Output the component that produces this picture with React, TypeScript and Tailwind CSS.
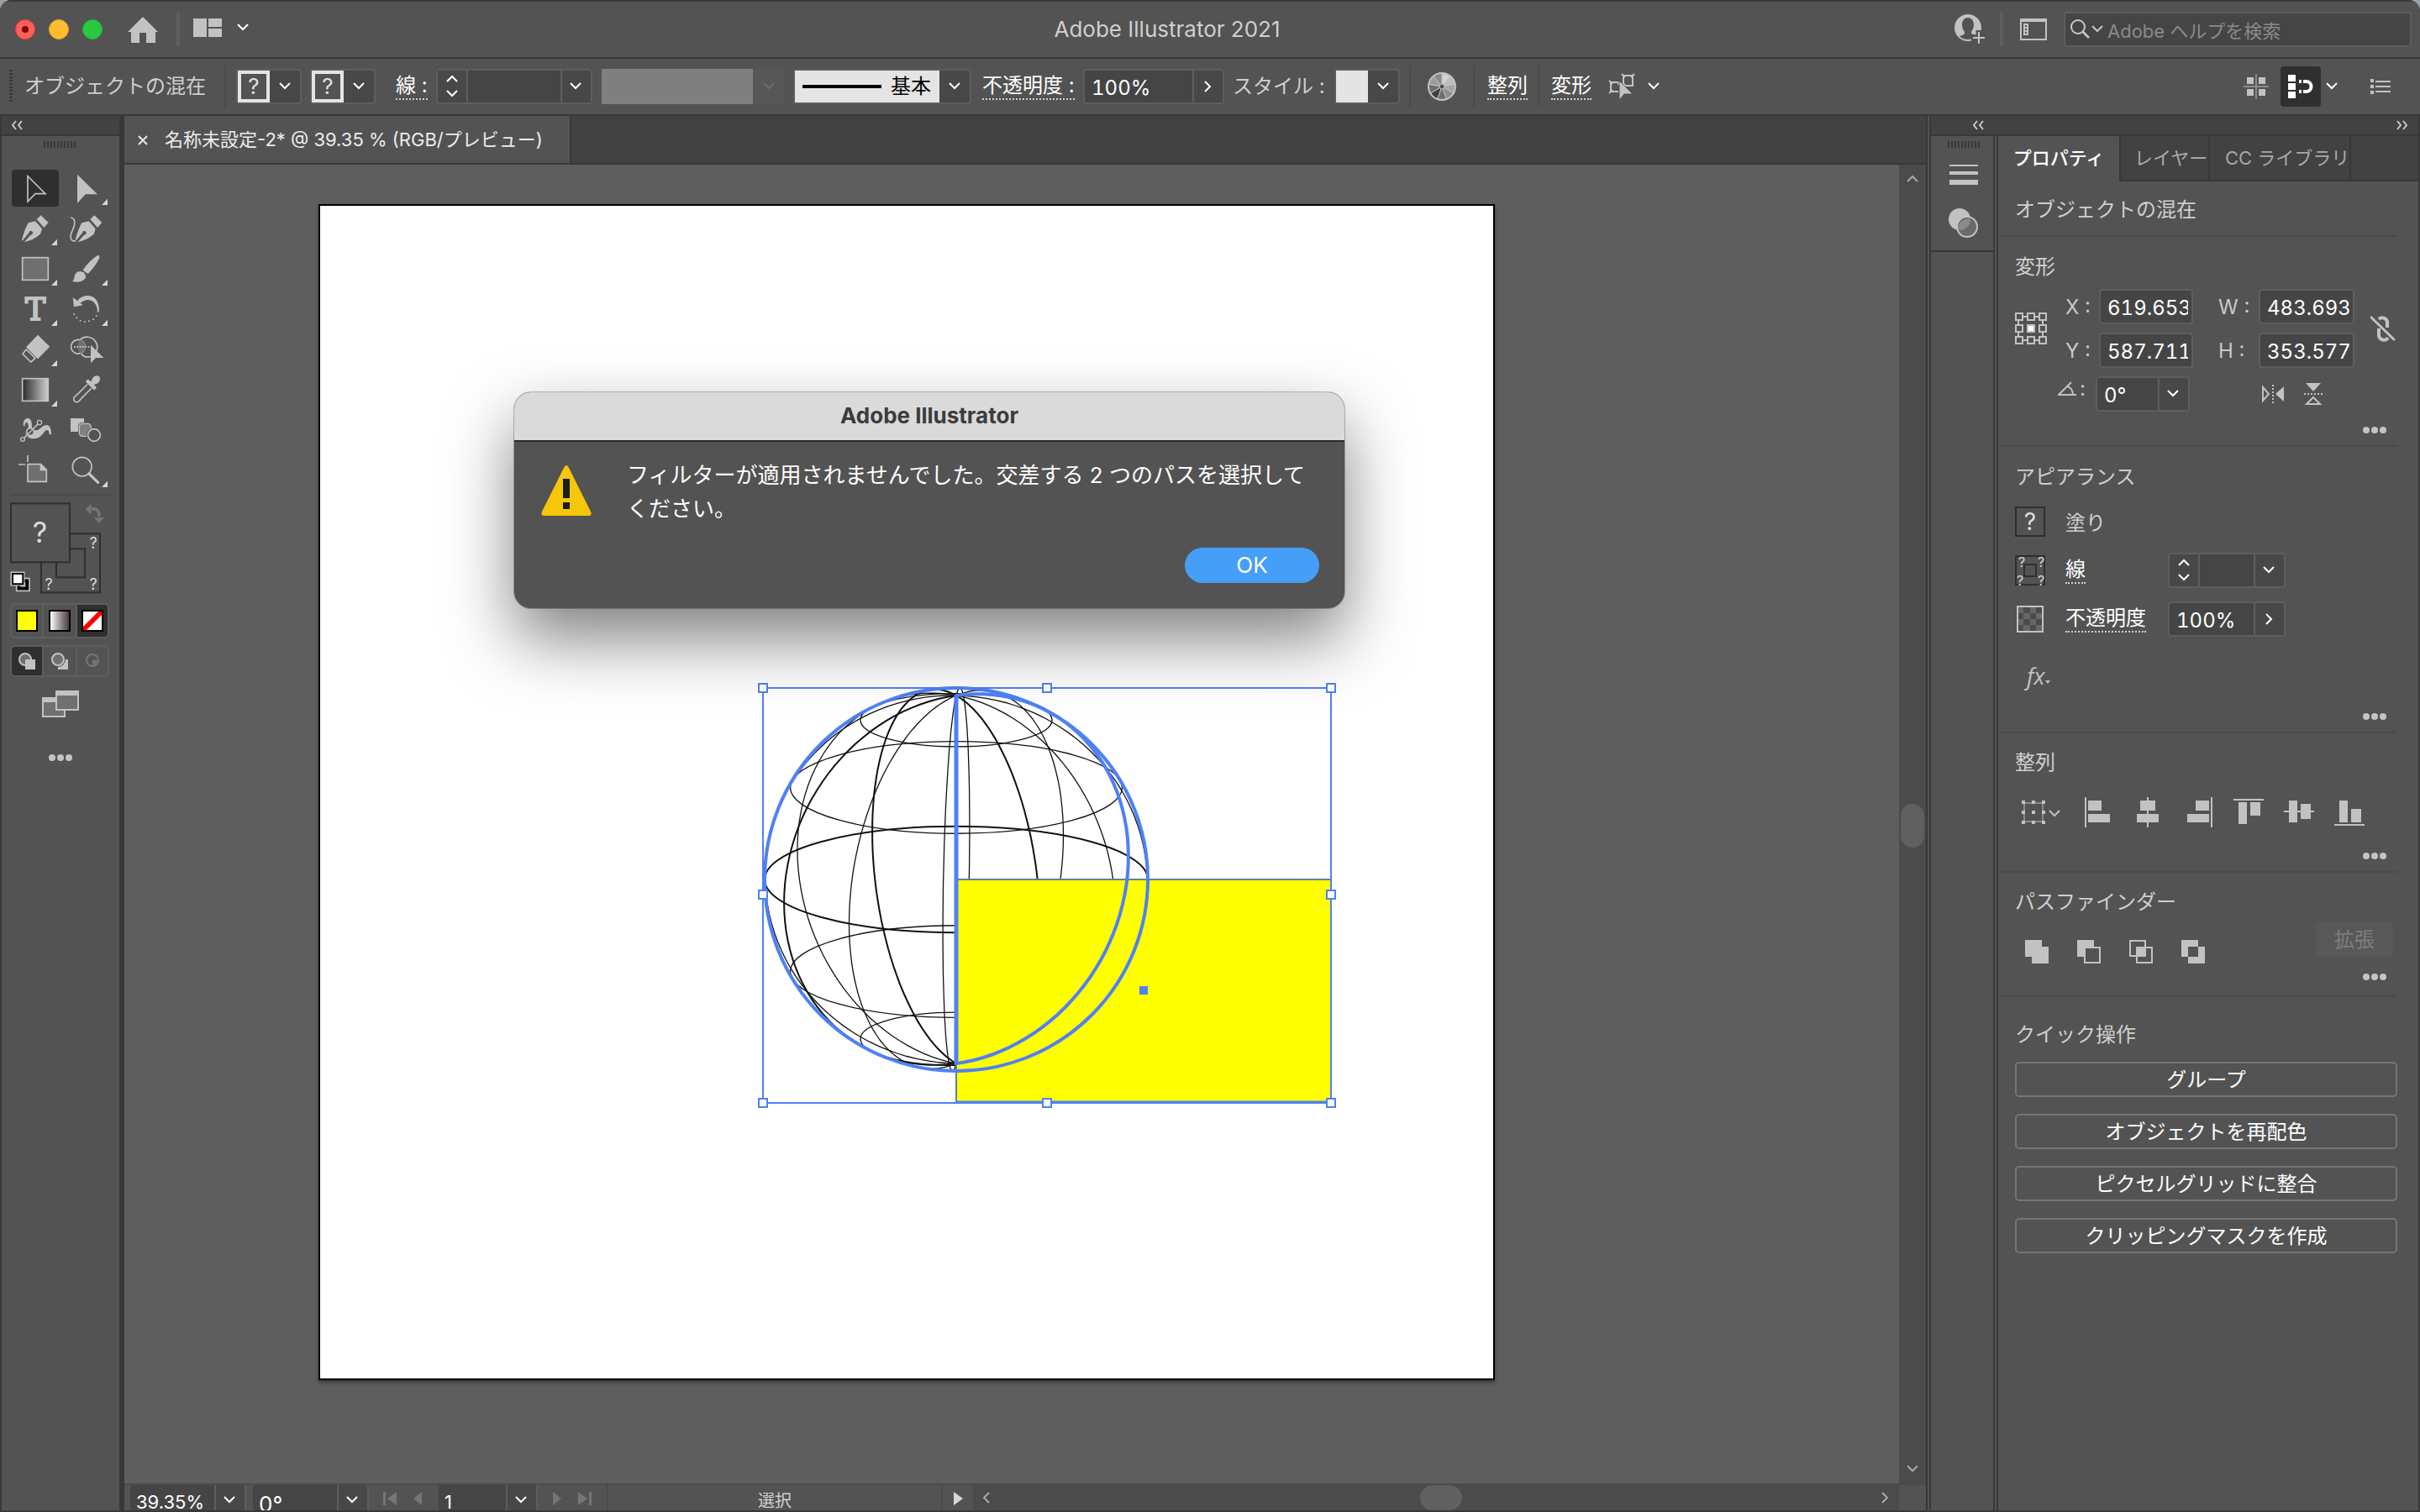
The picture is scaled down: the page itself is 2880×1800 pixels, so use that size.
import React from "react";

type IconProps = { w: number; h: number; vb?: string; children: React.ReactNode; className?: string };

function Icon({ w, h, vb, children, className = "" }: IconProps) {
  return (
    <svg width={w} height={h} viewBox={vb ?? `0 0 ${w} ${h}`} className={`shrink-0 ${className}`} aria-hidden="true">
      {children}
    </svg>
  );
}

function Chevron({ dir = "down", className = "text-white" }: { dir?: "down" | "up" | "left" | "right"; className?: string }) {
  const paths = {
    down: "M2 4l6 6 6-6",
    up: "M2 11l6-6 6 6",
    left: "M11 2l-6 6 6 6",
    right: "M5 2l6 6-6 6",
  };
  return (
    <Icon w={16} h={16} className={className}>
      <path d={paths[dir]} fill="none" stroke="currentColor" strokeWidth="2" />
    </Icon>
  );
}

function Double({ dir }: { dir: "left" | "right" }) {
  return (
    <Icon w={14} h={12} className="text-[#c8c8c8]">
      <path
        d={dir === "left" ? "M6 1L2 6l4 5M13 1L9 6l4 5" : "M1 1l4 5-4 5M8 1l4 5-4 5"}
        fill="none"
        stroke="currentColor"
        strokeWidth="2"
      />
    </Icon>
  );
}

function Grip() {
  return (
    <Icon w={38} h={8}>
      {Array.from({ length: 10 }, (_, i) => (
        <rect key={i} x={i * 4} y="0" width="2" height="8" fill="#383838" />
      ))}
    </Icon>
  );
}

function MoreButton({ label }: { label: string }) {
  return (
    <button aria-label={label} className="flex h-5 w-7 items-center">
      <Icon w={28} h={8}>
        <circle cx="4" cy="4" r="4" fill="#c4c4c4" />
        <circle cx="14" cy="4" r="4" fill="#c4c4c4" />
        <circle cx="24" cy="4" r="4" fill="#c4c4c4" />
      </Icon>
    </button>
  );
}

/* ---------- title bar ---------- */

function TitleBar() {
  return (
    <header className="flex h-[70px] shrink-0 items-center border-y-2 border-[#383838] bg-[#535353] pr-[10px] pl-[2px]">
      <div className="flex w-[450px] items-center">
        <div className="ml-4 flex gap-4">
          <button aria-label="閉じる" className="flex size-6 items-center justify-center rounded-full border border-[#d9453c] bg-[#ff5f57]">
            <span className="size-2 rounded-full bg-[#7c0500]" />
          </button>
          <button aria-label="しまう" className="size-6 rounded-full border border-[#e2a52c] bg-[#febc2e]" />
          <button aria-label="拡大" className="size-6 rounded-full border border-[#24b237] bg-[#28c840]" />
        </div>
        <button aria-label="ホーム" className="ml-[30px]">
          <Icon w={36} h={32}>
            <path d="M18 1L36 19H33V32H22V20H14V32H4V19H0Z" fill="#c2c2c2" />
          </Icon>
        </button>
        <span className="ml-[22px] h-10 w-1 bg-[#5e5e5e]" />
        <button aria-label="ワークスペース" className="ml-4 flex items-center gap-[17px] pb-1">
          <Icon w={34} h={22}>
            <path d="M0 0H16V22H0ZM18 0H34V10H18ZM18 12H34V22H18Z" fill="#c2c2c2" />
          </Icon>
          <Chevron />
        </button>
      </div>
      <h1 className="flex-1 text-center text-[26px] leading-[30px] text-[#cfcfcf]">Adobe Illustrator 2021</h1>
      <button aria-label="アカウント">
        <Icon w={38} h={36}>
          <circle cx="16" cy="16" r="16" fill="#c2c2c2" />
          <path
            d="M16 4C11.500 4 9 8 9 12.500C9 16 10.500 19 12 21C12.500 23.500 11 24.500 6 26C8 28.500 12 30 16 30C20 30 24 29 27 26V25C22 24 19.500 23.500 20 21C21.500 19 23 16 23 12.500C23 8 20.500 4 16 4Z"
            fill="#535353"
          />
          <path d="M29 19V36M20 28H38" stroke="#535353" strokeWidth="7" />
          <path d="M29 21V35M22 28H36" stroke="#c2c2c2" strokeWidth="2" />
        </Icon>
      </button>
      <span className="ml-4 h-10 w-1 bg-[#5e5e5e]" />
      <button aria-label="パネル表示" className="ml-5">
        <Icon w={32} h={26}>
          <rect x="1" y="1" width="30" height="24" fill="none" stroke="#c2c2c2" strokeWidth="2" />
          <path d="M0 0H32V4H0Z" fill="#c2c2c2" />
          <path d="M4 6H10V20H4Z" fill="#c2c2c2" />
          <path d="M6 8h2v2H6zM6 12h2v2H6zM6 16h2v2H6z" fill="#535353" />
        </Icon>
      </button>
      <label className="ml-5 flex h-[42px] w-[414px] items-center rounded-[4px] border-2 border-[#5e5e5e] bg-[#454545] pl-[6px]">
        <Icon w={24} h={24}>
          <circle cx="9" cy="9" r="8" fill="none" stroke="#c8c8c8" strokeWidth="2" />
          <path d="M14 14L22 22" stroke="#c8c8c8" strokeWidth="2.500" />
        </Icon>
        <Chevron className="text-[#c8c8c8]" />
        <input
          aria-label="ヘルプを検索"
          placeholder="Adobe ヘルプを検索"
          className="ml-1 min-w-0 flex-1 bg-transparent pt-1 text-[22px] outline-none placeholder:text-[#8a8a8a]"
        />
      </label>
    </header>
  );
}

/* ---------- control bar ---------- */

function UnknownPicker({ label }: { label: string }) {
  return (
    <button aria-label={label} className="flex h-[42px] w-[78px] rounded-[4px] border-2 border-[#5e5e5e] bg-[#484848]">
      <span className="flex h-full w-[38px] items-center justify-center border-4 border-[#e4e4e4] bg-[#535353] text-[26px] leading-none text-[#e0e0e0]">
        ?
      </span>
      <span className="flex h-full flex-1 items-center justify-center">
        <Chevron />
      </span>
    </button>
  );
}

function StrokeSpinner({ width, label }: { width: string; label: string }) {
  return (
    <div className={`flex h-[42px] ${width} rounded-[4px] border-2 border-[#5e5e5e] bg-[#454545]`}>
      <div className="flex w-9 flex-col items-center justify-between border-r-2 border-[#5e5e5e] bg-[#484848] py-[2px]">
        <button aria-label="増やす">
          <Chevron dir="up" />
        </button>
        <button aria-label="減らす">
          <Chevron />
        </button>
      </div>
      <input aria-label={label} className="min-w-0 flex-1 bg-transparent px-2 text-2xl text-white outline-none" />
      <button aria-label={`${label}の候補`} className="flex w-9 items-center justify-center border-l-2 border-[#5e5e5e] bg-[#484848] pr-[2px]">
        <Chevron />
      </button>
    </div>
  );
}

type ComboProps = { label: string; value: string; width: string; dir?: "down" | "right" };

function Combo({ label, value, width, dir = "down" }: ComboProps) {
  return (
    <div className={`flex h-[42px] ${width} shrink-0 rounded-[4px] border-2 border-[#5e5e5e] bg-[#454545]`}>
      <input
        aria-label={label}
        defaultValue={value}
        className="min-w-0 flex-1 bg-transparent pt-[3px] pl-2 text-2xl text-white tabular-nums outline-none"
      />
      <button aria-label={`${label}の候補`} className="flex w-9 items-center justify-center border-l-2 border-[#5e5e5e] bg-[#484848] pr-[2px]">
        <Chevron dir={dir} />
      </button>
    </div>
  );
}

const linkText = "border-b-2 border-dotted border-[#d0d0d0] text-2xl leading-[30px] whitespace-nowrap text-white";

function Separator({ className = "" }: { className?: string }) {
  return <span className={`h-[50px] w-[2px] shrink-0 bg-[#4b4b4b] ${className}`} />;
}

function ControlBar() {
  const fan = Array.from({ length: 9 }, (_, i) => i);
  const shades = ["#d2d2d2", "#bdbdbd", "#a5a5a5", "#8d8d8d", "#6e6e6e", "#414141", "#6e6e6e", "#9a9a9a", "#8a8a8a"];
  return (
    <div className="flex h-[68px] shrink-0 items-center border-b-2 border-[#383838] bg-[#535353] px-[2px]">
      <Icon w={4} h={40} className="ml-[9px]">
        <path d="M2 0V40" stroke="#383838" strokeWidth="4" strokeDasharray="2 2" />
      </Icon>
      <span className="ml-[14px] w-[238px] text-2xl leading-[30px] whitespace-nowrap text-[#cfcfcf]">オブジェクトの混在</span>
      <Separator />
      <div className="ml-3 flex gap-[10px]">
        <UnknownPicker label="塗り" />
        <UnknownPicker label="線のカラー" />
      </div>
      <div className="ml-6 w-12">
        <button className={linkText}>線 :</button>
      </div>
      <StrokeSpinner width="w-[186px]" label="線幅" />
      <button aria-label="可変線幅プロファイル" disabled className="ml-[11px] flex h-[42px] w-[218px]">
        <span className="h-full w-[180px] bg-[#7f7f7f]" />
        <span className="flex h-full flex-1 items-center justify-center bg-[#575757]">
          <Chevron className="text-[#6c6c6c]" />
        </span>
      </button>
      <button aria-label="ブラシ定義" className="ml-[10px] flex h-[42px] w-[212px] rounded-[4px] border-2 border-[#5e5e5e] bg-[#484848]">
        <span className="flex h-full w-[172px] items-center gap-[11px] bg-[#e4e4e4] pl-[9px] text-2xl text-black">
          <span className="h-1 w-[94px] bg-black" />
          基本
        </span>
        <span className="flex h-full flex-1 items-center justify-center">
          <Chevron />
        </span>
      </button>
      <div className="ml-[13px] w-[120px]">
        <button className={linkText}>不透明度 :</button>
      </div>
      <Combo label="不透明度" value="100%" width="w-[168px]" dir="right" />
      <span className="ml-[10px] w-[121px] text-2xl leading-[30px] whitespace-nowrap text-[#cfcfcf]">スタイル :</span>
      <button aria-label="グラフィックスタイル" className="flex h-[42px] w-[78px] rounded-[4px] border-2 border-[#5e5e5e] bg-[#484848]">
        <span className="h-full w-[38px] bg-[#e4e4e4]" />
        <span className="flex h-full flex-1 items-center justify-center">
          <Chevron />
        </span>
      </button>
      <Separator className="ml-[11px]" />
      <button aria-label="オブジェクトを再配色" className="ml-5">
        <Icon w={34} h={34}>
          {fan.map((i) => {
            const a = ((i * 40 - 90) * Math.PI) / 180;
            const b = (((i + 1) * 40 - 90) * Math.PI) / 180;
            return (
              <path
                key={i}
                d={`M17 17L${17 + 16 * Math.cos(a)} ${17 + 16 * Math.sin(a)}A16 16 0 0 1 ${17 + 16 * Math.cos(b)} ${17 + 16 * Math.sin(b)}Z`}
                fill={shades[i]}
                stroke="#c2c2c2"
                strokeWidth="1"
              />
            );
          })}
          <circle cx="17" cy="17" r="16" fill="none" stroke="#c2c2c2" strokeWidth="2" />
          <circle cx="17" cy="17" r="3" fill="#535353" stroke="#c2c2c2" />
        </Icon>
      </button>
      <Separator className="ml-5" />
      <button className={`ml-[15px] ${linkText}`}>整列</button>
      <Separator className="ml-3" />
      <button className={`ml-[14px] ${linkText}`}>変形</button>
      <button aria-label="オブジェクトを選択" className="ml-5 flex items-center gap-[14px]">
        <Icon w={32} h={32}>
          <g fill="none" stroke="#c2c2c2" strokeWidth="2">
            <path d="M18 3H29V15H18ZM16 1l4 4M31 1l-4 4M16 17l4-4" />
            <path d="M12 11H3V22H12M1 9l4 4M1 24l4-4M12 11V14" />
          </g>
          <path d="M13 9V32L19 25H29Z" fill="#c2c2c2" stroke="#535353" strokeWidth="1" />
        </Icon>
        <Chevron />
      </button>
      <span className="flex-1" />
      <button aria-label="グリッド">
        <Icon w={30} h={30}>
          <path d="M15 0V30M0 15H30" stroke="#8a8a8a" strokeWidth="2" />
          <path d="M4 4h8v8H4zM18 4h8v8h-8zM4 18h8v8H4zM18 18h8v8h-8z" fill="#c2c2c2" />
        </Icon>
      </button>
      <button aria-label="ピクセルに整合" className="ml-[14px] flex h-12 w-12 items-center justify-center rounded-[4px] bg-[#2f2f2f]">
        <Icon w={30} h={28}>
          <path d="M0 0H9V8H0ZM0 10H9V18H0ZM0 20H9V28H0Z" fill="#fff" />
          <path d="M18 8H21.500a6 6 0 0 1 0 12H18" fill="none" stroke="#fff" strokeWidth="4" />
          <path d="M13 6h3v4h-3zM13 18h3v4h-3z" fill="#fff" />
        </Icon>
      </button>
      <button aria-label="整合オプション" className="ml-[5px]">
        <Chevron />
      </button>
      <button aria-label="パネルメニュー" className="mr-[33px] ml-[38px]">
        <Icon w={24} h={18}>
          <path d="M0 0h4v4H0zM0 7h4v4H0zM0 14h4v4H0zM6 2h18v2H6zM6 8h18v2H6zM6 14h18v2H6z" fill="#c2c2c2" />
        </Icon>
      </button>
    </div>
  );
}

/* ---------- toolbox ---------- */

const LIGHT = "#c2c2c2";
const MID = "#707070";
const PANEL = "#535353";

const nib = (
  <g fill={LIGHT}>
    <path d="M146 379L173 405L157 423L131 393Z" />
    <path d="M78 466C86 440 92 420 101 406L126 400L150 427L144 446C128 460 108 470 87 474L109 449A7 7 0 1 0 103 442L80 470Z" />
  </g>
);

const tools: { name: string; col: 0 | 1; menu: boolean; art: React.ReactNode }[] = [
  { name: "選択ツール", col: 0, menu: false, art: <path d="M99 239V330L126 302H162Z" fill="none" stroke={LIGHT} strokeWidth="5" /> },
  { name: "ダイレクト選択ツール", col: 1, menu: true, art: <path d="M276 233V336L305 304H348Z" fill={LIGHT} /> },
  { name: "ペンツール", col: 0, menu: true, art: nib },
  {
    name: "曲線ツール",
    col: 1,
    menu: false,
    art: (
      <>
        <g transform="translate(191 0)">{nib}</g>
        <path d="M252 387C272 390 268 412 260 430C250 450 246 472 270 471" fill="none" stroke={LIGHT} strokeWidth="5" />
      </>
    ),
  },
  { name: "長方形ツール", col: 0, menu: true, art: <rect x="80" y="530" width="92" height="80" fill={MID} stroke={LIGHT} strokeWidth="5" /> },
  {
    name: "ブラシツール",
    col: 1,
    menu: true,
    art: (
      <g fill={LIGHT}>
        <path d="M345 524Q357 518 355 531Q340 562 315 587Q306 586 296 574Q318 542 345 524Z" />
        <path d="M258 614C270 607 260 590 277 581C294 574 308 588 306 601C298 618 275 620 258 614Z" />
      </g>
    ),
  },
  {
    name: "文字ツール",
    col: 0,
    menu: true,
    art: (
      <text x="126" y="753" textAnchor="middle" fontFamily="DejaVu Serif" fontSize="109" fill={LIGHT} stroke={LIGHT} strokeWidth="6">
        T
      </text>
    ),
  },
  {
    name: "回転ツール",
    col: 1,
    menu: true,
    art: (
      <>
        <path d="M276 686C292 658 356 652 354 722L348 726C350 684 312 668 288 692Z" fill={LIGHT} />
        <path d="M260 672L264 706L296 700Z" fill={LIGHT} />
        <g fill={LIGHT}>
          <circle cx="265" cy="732" r="3" />
          <circle cx="274" cy="745" r="3" />
          <circle cx="287" cy="755" r="3" />
          <circle cx="303" cy="759" r="3" />
          <circle cx="318" cy="757" r="3" />
          <circle cx="333" cy="750" r="3" />
          <circle cx="344" cy="738" r="3" />
        </g>
      </>
    ),
  },
  {
    name: "消しゴムツール",
    col: 0,
    menu: true,
    art: (
      <>
        <path d="M135 806L178 848L135 892L93 850Z" fill={LIGHT} />
        <path d="M94 858L81 874L110 903L126 889Z" fill="none" stroke={LIGHT} strokeWidth="5" strokeLinejoin="round" />
      </>
    ),
  },
  {
    name: "シェイプ形成ツール",
    col: 1,
    menu: false,
    art: (
      <>
        <path d="M284 826A36 36 0 1 1 318 885Q300 888 288 870" fill="none" stroke={LIGHT} strokeWidth="5" />
        <circle cx="280" cy="848" r="25" fill={PANEL} />
        <path d="M284 826Q302 830 303 850Q302 866 286 872Q268 850 284 826Z" fill={MID} />
        <path d="M286 824A25 25 0 1 0 286 872" fill="none" stroke={LIGHT} strokeWidth="5" />
        <path d="M286 824A25 25 0 0 1 286 872" fill="none" stroke="#8a8a8a" strokeWidth="4" />
        <path d="M264 849H322" stroke="#e4e4e4" strokeWidth="5" strokeDasharray="5 5" />
        <path d="M324 842V906L342 888H370Z" fill={LIGHT} />
      </>
    ),
  },
  {
    name: "グラデーションツール",
    col: 0,
    menu: true,
    art: (
      <>
        <defs>
          <linearGradient id="toolGradient">
            <stop offset="0" stopColor="#2c2c2c" />
            <stop offset="1" stopColor="#cfcfcf" />
          </linearGradient>
        </defs>
        <rect x="80" y="962" width="92" height="80" fill="url(#toolGradient)" stroke={LIGHT} strokeWidth="5" />
      </>
    ),
  },
  {
    name: "スポイトツール",
    col: 1,
    menu: false,
    art: (
      <g transform="translate(342 967) rotate(45)">
        <ellipse cx="0" cy="0" rx="13" ry="17" fill={LIGHT} />
        <path d="M-8 6H8V24H-8Z" fill={LIGHT} />
        <rect x="-22" y="17" width="44" height="13" rx="4" fill={LIGHT} />
        <path d="M-10 32V78L-11 96A11 11 0 0 0 11 96L10 78V32" fill="none" stroke={LIGHT} strokeWidth="5" />
      </g>
    ),
  },
  {
    name: "パペットワープツール",
    col: 0,
    menu: false,
    art: (
      <>
        <path d="M84 1132C78 1100 112 1094 113 1122Q113 1142 122 1146Q134 1150 146 1138Q160 1124 172 1129Q184 1136 183 1162H176Q176 1146 168 1146C156 1148 150 1176 122 1177Q98 1177 90 1160L100 1142Q104 1126 96 1118Q88 1118 89 1132Z" fill={LIGHT} />
        <path d="M81 1179L141 1119" stroke={PANEL} strokeWidth="12" />
        <path d="M86 1174L136 1124" stroke={LIGHT} strokeWidth="5" />
        <circle cx="141" cy="1119" r="8" fill={PANEL} stroke={LIGHT} strokeWidth="4" />
        <circle cx="108" cy="1152" r="13" fill={PANEL} stroke={LIGHT} strokeWidth="5" />
        <path d="M98 1162L118 1142" stroke={LIGHT} strokeWidth="4" />
        <circle cx="81" cy="1179" r="7" fill={PANEL} stroke={LIGHT} strokeWidth="4" />
      </>
    ),
  },
  {
    name: "ブレンドツール",
    col: 1,
    menu: false,
    art: (
      <>
        <path d="M252 1104H300V1152H252Z" fill={LIGHT} />
        <rect x="279" y="1119" width="50" height="52" rx="15" fill={PANEL} />
        <rect x="283" y="1123" width="42" height="45" rx="12" fill="#808080" stroke={LIGHT} strokeWidth="4" />
        <circle cx="336" cy="1164" r="27" fill={PANEL} />
        <circle cx="336" cy="1164" r="22" fill={PANEL} stroke={LIGHT} strokeWidth="5" />
      </>
    ),
  },
  {
    name: "アートボードツール",
    col: 0,
    menu: false,
    art: (
      <>
        <path d="M66 1269H90M99 1236V1260" stroke={LIGHT} strokeWidth="5" />
        <path d="M99 1268H146L166 1288V1330H99Z" fill={MID} stroke={LIGHT} strokeWidth="5" />
        <path d="M144 1268V1290H168Z" fill={LIGHT} stroke={LIGHT} strokeWidth="2" />
      </>
    ),
  },
  {
    name: "ズームツール",
    col: 1,
    menu: true,
    art: (
      <>
        <circle cx="293" cy="1277" r="34" fill="none" stroke={LIGHT} strokeWidth="5" />
        <path d="M318 1302L350 1333" stroke={LIGHT} strokeWidth="10" strokeLinecap="round" />
      </>
    ),
  },
];

function Tools() {
  return (
    <div className="mt-[24px] ml-[10px] grid w-[120px] grid-cols-2">
      {tools.map((t, i) => {
        const top = 210 + 144 * Math.floor(i / 2);
        const left = 36 + 180 * t.col;
        return (
          <button key={t.name} aria-label={t.name} className="relative flex h-12 w-[60px] items-center">
            {i === 0 && <span className="absolute top-[2px] left-[2px] h-11 w-14 rounded-[4px] bg-[#2f2f2f]" />}
            <Icon w={60} h={48} vb={`${left} ${top} 180 144`} className="relative">
              {t.art}
              {t.menu && <path d={`M${left + 168} ${top + 110}V${top + 132}H${left + 147}Z`} fill="#d6d6d6" />}
            </Icon>
          </button>
        );
      })}
    </div>
  );
}

function FillStroke() {
  return (
    <Icon w={120} h={112} vb="36 50 360 336" className="mt-[7px] ml-[10px]">
      <rect x="147" y="165" width="210" height="210" fill={PANEL} stroke="#2f2f2f" strokeWidth="6" />
      <rect x="201" y="219" width="102" height="102" fill={PANEL} stroke="#2f2f2f" strokeWidth="6" />
      <rect x="39" y="57" width="210" height="210" fill={PANEL} stroke="#2f2f2f" strokeWidth="6" />
      <g fill="#dcdcdc" fontFamily="Inter" textAnchor="middle">
        <text x="142" y="198" fontSize="102">?</text>
        <text x="333" y="219" fontSize="54">?</text>
        <text x="333" y="366" fontSize="54">?</text>
        <text x="174" y="366" fontSize="54">?</text>
      </g>
      <path d="M327 77H338Q354 78 354 104" fill="none" stroke="#757575" strokeWidth="11" />
      <path d="M305 78L326 59V96ZM335 107H373L354 127Z" fill="#757575" />
      <path d="M59 325H105V369H59Z" fill="#000" stroke={LIGHT} strokeWidth="5" />
      <path d="M73 339H91V355H73Z" fill={LIGHT} />
      <path d="M40 303H86V349H40Z" fill="#fff" stroke={LIGHT} strokeWidth="5" />
      <path d="M45 308H82V345H45Z" fill="#fff" stroke="#000" strokeWidth="6" />
    </Icon>
  );
}

function Toolbox() {
  return (
    <aside className="flex w-[146px] shrink-0 flex-col border-r-2 border-l-2 border-[#383838] bg-[#535353]">
      <div className="flex min-h-0 flex-1 flex-col border-r-2 border-[#383838]">
        <div className="flex h-6 shrink-0 items-center border-b-2 border-[#383838] bg-[#424242] pl-[11px]">
          <button aria-label="折りたたむ">
            <Double dir="left" />
          </button>
        </div>
        <div className="mt-[6px] ml-[50px] h-[8px]">
          <Grip />
        </div>
        <Tools />
        <span className="mx-[10px] mt-[4px] h-[2px] shrink-0 bg-[#4b4b4b]" />
        <FillStroke />
        <div className="mt-[9px] ml-[10px] flex h-[42px] w-[118px] shrink-0 overflow-hidden rounded-[6px] border-2 border-[#5e5e5e]">
          <button aria-label="カラー" className="flex w-[38px] items-center justify-center border-r-2 border-[#5e5e5e]">
            <span className="size-[26px] border-2 border-black bg-[#ffff00]" />
          </button>
          <button aria-label="グラデーション" className="flex w-10 items-center justify-center border-r-2 border-[#5e5e5e]">
            <span className="size-[26px] border-2 border-black bg-linear-to-r from-white to-[#4a4040]" />
          </button>
          <button aria-label="なし" className="flex flex-1 items-center justify-center bg-[#2f2f2f]">
            <Icon w={26} h={26}>
              <path d="M0 0H26V26H0Z" fill="#000" />
              <path d="M2 2H24V24H2Z" fill="#fff" />
              <path d="M2 24V20L20 2H24V6L6 24Z" fill="#ff0000" />
            </Icon>
          </button>
        </div>
        <div className="mt-2 ml-[10px] flex h-[38px] w-[118px] shrink-0 overflow-hidden rounded-[6px] border-2 border-[#5e5e5e]">
          <button aria-label="標準描画" className="flex w-[38px] items-center justify-center border-r-2 border-[#5e5e5e] bg-[#2f2f2f]">
            <Icon w={20} h={20}>
              <circle cx="8" cy="8" r="7" fill={MID} stroke={LIGHT} strokeWidth="2" />
              <path d="M8 8H20V20H8Z" fill={LIGHT} />
            </Icon>
          </button>
          <button aria-label="背面描画" className="flex w-10 items-center justify-center border-r-2 border-[#5e5e5e]">
            <Icon w={20} h={20}>
              <path d="M8 8H20V20H8Z" fill={LIGHT} />
              <circle cx="8" cy="8" r="9" fill={PANEL} />
              <circle cx="8" cy="8" r="7" fill={MID} stroke={LIGHT} strokeWidth="2" />
            </Icon>
          </button>
          <button aria-label="内側描画" className="flex flex-1 items-center justify-center">
            <Icon w={20} h={20}>
              <circle cx="10" cy="9" r="7" fill="none" stroke="#757575" strokeWidth="2" />
              <path d="M10 9H16L14 14L10 15Z" fill="#757575" />
            </Icon>
          </button>
        </div>
        <button aria-label="スクリーンモード" className="mt-4 ml-12 w-11 shrink-0">
          <Icon w={44} h={32}>
            <path d="M1 9H27V31H1Z" fill={MID} stroke={LIGHT} strokeWidth="2" />
            <path d="M1 9H27V14H1Z" fill={LIGHT} />
            <path d="M17 1H43V23H17Z" fill={MID} stroke={LIGHT} strokeWidth="2" />
            <path d="M17 1H43V6H17Z" fill={LIGHT} />
          </Icon>
        </button>
        <div className="mt-[38px] ml-14">
          <MoreButton label="ツールバーを編集" />
        </div>
      </div>
    </aside>
  );
}

/* ---------- artwork ---------- */

const R = 228;
const CX = 1138;
const CY = 1048;
const TILT = 0.281;

function meridian(deg: number) {
  const l = (deg * Math.PI) / 180;
  const pts: string[] = [];
  for (let p = -90; p <= 90; p += 3) {
    const f = (p * Math.PI) / 180;
    const x = CX + R * Math.cos(f) * Math.sin(l);
    const y = CY - R * Math.sin(f) * Math.cos(TILT) + R * Math.cos(f) * Math.cos(l) * Math.sin(TILT);
    pts.push(`${x.toFixed(1)} ${y.toFixed(1)}`);
  }
  return `M${pts.join("L")}`;
}

function Artwork() {
  const blue = "#4f80f7";
  const longitudes = [-4, 26, 56, 86, 116, 146, 176, 206, 236, 266, 296, 326];
  const handles = [
    [908, 820],
    [1246, 820],
    [1584, 820],
    [908, 1066],
    [1584, 1066],
    [908, 1314],
    [1246, 1314],
    [1584, 1314],
  ];
  return (
    <svg viewBox="379 244 1400 1400" className="block w-full" role="img" aria-label="球体と長方形">
      <g fill="none" stroke="#111">
        {[-60, -30, 0, 30, 60].map((lat) => {
          const f = (lat * Math.PI) / 180;
          return (
            <ellipse
              key={lat}
              cx={CX}
              cy={CY - R * Math.sin(f) * Math.cos(TILT)}
              rx={R * Math.cos(f)}
              ry={R * Math.cos(f) * Math.sin(TILT)}
              strokeWidth={lat === 0 ? 2 : 1.3}
            />
          );
        })}
        {longitudes.map((d) => (
          <path key={d} d={meridian(d)} strokeWidth={[26, 116, 206, 296].includes(d) ? 2 : 1.3} />
        ))}
      </g>
      <path d="M1138 1048H1584V1314H1138Z" fill="#ffff00" />
      <g fill="none" stroke={blue}>
        <path d="M1138 1048H1584M1138 1268V1314" stroke="#5b80a8" strokeWidth="2" />
        <path d="M1138 1313H1584" strokeWidth="3" />
        <circle cx={CX} cy={CY} r={R} strokeWidth="4" />
        <path d={meridian(116)} strokeWidth="4" />
        <path d="M1138 828V1268" strokeWidth="5" />
        <rect x="908" y="820" width="676" height="494" strokeWidth="2" />
      </g>
      {handles.map(([x, y]) => (
        <rect key={`${x}-${y}`} x={x - 5} y={y - 5} width="10" height="10" fill="#fff" stroke={blue} strokeWidth="2" />
      ))}
      <rect x="1356" y="1175" width="10" height="10" fill={blue} />
    </svg>
  );
}

/* ---------- document window ---------- */

type StatusFieldProps = { label: string; value: string; width: string; size?: string };

function StatusField({ label, value, width, size = "text-[22px]" }: StatusFieldProps) {
  return (
    <div className={`flex h-10 ${width} shrink-0 rounded-t-[4px] border-r-2 border-[#5e5e5e] bg-[#454545]`}>
      <input aria-label={label} defaultValue={value} className={`min-w-0 flex-1 bg-transparent pl-[7px] ${size} text-white outline-none`} />
      <button aria-label={`${label}の候補`} className="flex w-9 items-center justify-center border-l-2 border-[#5e5e5e] bg-[#484848] pr-[2px] pb-1">
        <Chevron />
      </button>
    </div>
  );
}

function StatusBar() {
  return (
    <footer className="flex h-8 shrink-0 items-start overflow-hidden border-t-2 border-[#4b4b4b] bg-[#535353]">
      <div className="flex h-10 w-[1010px] shrink-0 items-start">
        <span className="w-[7px]" />
        <StatusField label="ズーム" value="39.35%" width="w-[138px]" />
        <span className="w-2" />
        <StatusField label="回転" value="0°" width="w-[138px]" size="pt-1 text-[26px]" />
        <div className="flex h-8 w-[83px] shrink-0 items-center gap-[20px] pl-[17px] text-[#757575]">
          <button aria-label="先頭">
            <Icon w={16} h={16}>
              <path d="M0 0H3V16H0ZM16 0V16L5 8Z" fill="currentColor" />
            </Icon>
          </button>
          <button aria-label="前へ">
            <Icon w={10} h={16}>
              <path d="M10 0V16L0 8Z" fill="currentColor" />
            </Icon>
          </button>
        </div>
        <StatusField label="アートボード" value="1" width="w-[118px]" />
        <div className="flex h-8 w-[82px] shrink-0 items-center gap-[20px] pl-[18px] text-[#757575]">
          <button aria-label="次へ">
            <Icon w={10} h={16}>
              <path d="M0 0V16L10 8Z" fill="currentColor" />
            </Icon>
          </button>
          <button aria-label="最後">
            <Icon w={16} h={16}>
              <path d="M13 0H16V16H13ZM0 0V16L11 8Z" fill="currentColor" />
            </Icon>
          </button>
        </div>
        <span className="h-10 w-[400px] shrink-0 border-x-2 border-[#4b4b4b] text-center text-xl leading-[38px] text-[#cfcfcf]">選択</span>
        <button aria-label="ステータス表示" className="flex h-8 w-9 items-center justify-center">
          <Icon w={11} h={16}>
            <path d="M0 0V16L11 8Z" fill="#d6d6d6" />
          </Icon>
        </button>
      </div>
      <div className="flex h-full flex-1 items-center bg-[#4b4b4b]">
        <Chevron dir="left" className="ml-2 text-[#a8a8a8]" />
        <span className="ml-[508px] h-full w-[50px] rounded-full bg-[#606060]" />
        <span className="flex-1" />
        <Chevron dir="right" className="mr-[9px] text-[#a8a8a8]" />
      </div>
      <span className="h-full w-8 bg-[#535353]" />
    </footer>
  );
}

function DocumentWindow() {
  return (
    <main className="flex min-w-0 flex-1 flex-col border-r-2 border-l-2 border-[#383838] bg-[#5e5e5e]">
      <div className="flex h-[58px] shrink-0 border-b-2 border-[#383838] bg-[#424242]">
        <div className="flex w-[532px] items-center border-r-2 border-[#383838] bg-[#535353] pl-4">
          <button aria-label="書類を閉じる">
            <Icon w={12} h={12} className="mt-[1px]">
              <path d="M1 1L11 11M11 1L1 11" stroke="#e8e8e8" strokeWidth="2" />
            </Icon>
          </button>
          <span className="ml-5 text-[22px] whitespace-nowrap text-[#ececec]">名称未設定-2* @ 39.35 % (RGB/プレビュー)</span>
        </div>
      </div>
      <div className="flex min-h-0 flex-1">
        <div className="min-w-0 flex-1 overflow-hidden">
          <div className="mt-[47px] ml-[231px] w-[1400px] bg-white shadow-[0_3px_4px_#00000060] outline-2 -outline-offset-2 outline-black">
            <Artwork />
          </div>
        </div>
        <div className="flex w-8 flex-col items-center bg-[#4b4b4b] py-[9px]">
          <Chevron dir="up" className="text-[#a8a8a8]" />
          <span className="mt-[736px] h-[52px] w-7 rounded-full bg-[#606060]" />
          <span className="flex-1" />
          <Chevron className="text-[#a8a8a8]" />
        </div>
      </div>
      <StatusBar />
    </main>
  );
}

/* ---------- properties panel ---------- */

function Section({ title, pt = "pt-5", children }: { title: string; pt?: string; children: React.ReactNode }) {
  return (
    <section className={`mr-[25px] border-b-2 border-[#4b4b4b] pl-5 last:border-b-0 ${pt}`}>
      <h2 className="text-2xl leading-[30px] text-[#cfcfcf]">{title}</h2>
      {children}
    </section>
  );
}

function Field({ label, value, id, labelWidth, width }: { label: string; value: string; id: string; labelWidth: string; width: string }) {
  return (
    <div className="flex items-center">
      <label htmlFor={id} className={`${labelWidth} pt-[2px] text-2xl text-[#c8c8c8]`}>
        {label}
      </label>
      <input
        id={id}
        defaultValue={value}
        className={`h-[42px] ${width} rounded-[4px] border-2 border-[#5e5e5e] bg-[#454545] pt-[3px] pr-1 pl-2 text-2xl text-white tabular-nums outline-none`}
      />
    </div>
  );
}

function TransformSection() {
  const pts = [4, 18, 32];
  return (
    <Section title="変形" pt="pt-[21px]">
      <div className="mt-[11px] flex">
        <Icon w={38} h={38} className="mt-7">
          <path d="M4 5H33V33H4Z" fill="none" stroke={LIGHT} strokeWidth="2" />
          {pts.flatMap((y) =>
            pts.map((x) => (
              <rect key={`${x}-${y}`} x={x - 3} y={y - 3} width="8" height="8" fill={x === 18 && y === 18 ? "#fff" : PANEL} stroke={LIGHT} strokeWidth="2" />
            ))
          )}
        </Icon>
        <div className="ml-[22px] flex gap-[30px]">
          <div className="flex flex-col gap-[10px]">
            <Field id="pos-x" label="X :" value="619.653" labelWidth="w-10" width="w-[112px]" />
            <Field id="pos-y" label="Y :" value="587.711" labelWidth="w-10" width="w-[112px]" />
          </div>
          <div className="flex flex-col gap-[10px]">
            <Field id="size-w" label="W :" value="483.693" labelWidth="w-12" width="w-[114px]" />
            <Field id="size-h" label="H :" value="353.577" labelWidth="w-12" width="w-[114px]" />
          </div>
        </div>
        <button aria-label="縦横比を固定" className="mt-[31px] ml-[19px] self-start">
          <Icon w={30} h={32}>
            <path d="M10 5a6 6 0 0 1 10 3V15M10 16V24a6 6 0 0 0 11 3" fill="none" stroke={LIGHT} strokeWidth="4" />
            <path d="M0 2L29 30" stroke={LIGHT} strokeWidth="3" />
          </Icon>
        </button>
      </div>
      <div className="mt-[10px] flex h-[42px] items-center">
        <div className="ml-[51px] flex w-[45px] items-center gap-1 pb-3">
          <Icon w={22} h={18}>
            <path d="M16 1L1 16H22M12 6Q18 9 18 16" fill="none" stroke={LIGHT} strokeWidth="2" />
          </Icon>
          <span className="text-2xl leading-none text-[#c8c8c8]">:</span>
        </div>
        <Combo label="角度" value="0°" width="w-[112px]" />
        <button aria-label="水平方向に反転" className="ml-[86px]">
          <Icon w={26} h={22}>
            <path d="M1 3V19L8 11Z" fill="none" stroke={LIGHT} strokeWidth="2" />
            <path d="M13 0V22" stroke={LIGHT} strokeWidth="2" strokeDasharray="2 2" />
            <path d="M26 2V20L16 11Z" fill={LIGHT} />
          </Icon>
        </button>
        <button aria-label="垂直方向に反転" className="ml-6">
          <Icon w={22} h={26}>
            <path d="M2 0H20L11 10Z" fill={LIGHT} />
            <path d="M0 13H22" stroke={LIGHT} strokeWidth="2" strokeDasharray="2 2" />
            <path d="M3 25H19L11 17Z" fill="none" stroke={LIGHT} strokeWidth="2" />
          </Icon>
        </button>
      </div>
      <div className="mt-3 mr-[13px] flex justify-end pb-2">
        <MoreButton label="変形の詳細オプション" />
      </div>
    </Section>
  );
}

function AppearanceSection() {
  return (
    <Section title="アピアランス" pt="pt-[21px]">
      <div className="mt-[15px] flex h-[46px] items-center gap-6">
        <button aria-label="塗りのカラー" className="flex size-9 items-center justify-center border-2 border-[#2f2f2f] text-[28px] leading-none text-[#dcdcdc]">
          ?
        </button>
        <span className="pt-1 text-2xl text-[#cfcfcf]">塗り</span>
      </div>
      <div className="mt-[14px] flex h-[42px] items-center">
        <button aria-label="線のカラー設定">
          <Icon w={36} h={36} className="overflow-visible">
            <rect x="1" y="1" width="34" height="34" fill={PANEL} stroke="#2f2f2f" strokeWidth="2" />
            <g fill="#dcdcdc" fontFamily="Inter" fontSize="16">
              <text x="4" y="14">?</text>
              <text x="27" y="14">?</text>
              <text x="2" y="36">?</text>
              <text x="27" y="36">?</text>
            </g>
            <rect x="11" y="11" width="14" height="14" fill={PANEL} stroke="#2f2f2f" strokeWidth="2" />
          </Icon>
        </button>
        <div className="ml-6 w-[122px]">
          <button className={linkText}>線</button>
        </div>
        <StrokeSpinner width="w-[140px]" label="線の太さ" />
      </div>
      <div className="mt-4 flex h-[42px] items-center">
        <Icon w={36} h={36}>
          <rect x="3" y="3" width="30" height="30" fill="#686868" stroke={LIGHT} strokeWidth="2" />
          <path d="M10 4h8v7h-8zM25 4h7v7h-7zM4 11h6v7H4zM18 11h7v7h-7zM10 18h8v7h-8zM25 18h7v7h-7zM4 25h6v7H4zM18 25h7v7h-7z" fill="#4b4b4b" />
        </Icon>
        <div className="ml-6 w-[122px]">
          <button className={linkText}>不透明度</button>
        </div>
        <Combo label="不透明度の値" value="100%" width="w-[140px]" dir="right" />
      </div>
      <button aria-label="効果を選択" className="mt-7 ml-[14px] flex h-9 items-center text-[#c2c2c2]">
        <span className="font-['Open_Sans'] text-[27px] leading-none italic">fx</span>
        <Icon w={6} h={4} className="mt-4 ml-[1px]">
          <path d="M0 0H6L3 4Z" fill={LIGHT} />
        </Icon>
      </button>
      <div className="mt-[21px] mr-[13px] flex justify-end pb-2">
        <MoreButton label="アピアランスの詳細" />
      </div>
    </Section>
  );
}

const alignIcons: { name: string; d: string }[] = [
  { name: "左揃え", d: "M3 0H5V36H3ZM7 4H23V16H7ZM7 20H33V30H7Z" },
  { name: "水平中央揃え", d: "M17 0H19V36H17ZM9 4H27V16H9ZM5 20H31V30H5Z" },
  { name: "右揃え", d: "M33 0H35V36H33ZM15 4H31V16H15ZM5 20H31V30H5Z" },
  { name: "上揃え", d: "M0 2H36V4H0ZM6 6H16V32H6ZM20 6H32V22H20Z" },
  { name: "垂直中央揃え", d: "M0 16H36V18H0ZM6 4H16V30H6ZM20 8H32V26H20Z" },
  { name: "下揃え", d: "M0 32H36V34H0ZM6 4H16V30H6ZM20 14H32V30H20Z" },
];

function AlignSection() {
  return (
    <Section title="整列">
      <div className="mt-6 flex h-10 items-center">
        <button aria-label="整列の基準" className="ml-2 flex w-[68px] items-center gap-[3px]">
          <Icon w={28} h={28}>
            <path d="M3 3H25V25H3Z" fill="none" stroke="#8a8a8a" strokeWidth="2" />
            <path d="M0 0h4v4H0zM12 0h4v4h-4zM24 0h4v4h-4zM0 12h4v4H0zM12 12h4v4h-4zM24 12h4v4h-4zM0 24h4v4H0zM12 24h4v4h-4zM24 24h4v4h-4z" fill={LIGHT} />
          </Icon>
          <Chevron className="mt-1 text-[#c2c2c2]" />
        </button>
        <div className="ml-1 flex gap-6">
          {alignIcons.map((a) => (
            <button key={a.name} aria-label={a.name}>
              <Icon w={36} h={36}>
                <path d={a.d} fill={LIGHT} />
              </Icon>
            </button>
          ))}
        </div>
      </div>
      <div className="mt-[22px] mr-[13px] flex justify-end pb-2">
        <MoreButton label="整列の詳細" />
      </div>
    </Section>
  );
}

function PathfinderSection() {
  const shapes: { name: string; art: React.ReactNode }[] = [
    { name: "合体", art: <path d="M0 0H20V8H28V28H8V20H0Z" fill={LIGHT} /> },
    {
      name: "前面オブジェクトで型抜き",
      art: (
        <>
          <path d="M0 0H20V8H8V20H0Z" fill={LIGHT} />
          <path d="M9 9H27V27H9Z" fill="none" stroke={LIGHT} strokeWidth="2" />
        </>
      ),
    },
    {
      name: "交差",
      art: (
        <>
          <path d="M1 1H19V19H1ZM9 9H27V27H9Z" fill="none" stroke={LIGHT} strokeWidth="2" />
          <path d="M8 8H20V20H8Z" fill={LIGHT} />
        </>
      ),
    },
    { name: "中マド", art: <path fillRule="evenodd" d="M0 0H20V8H28V28H8V20H0ZM8 8V20H20V8Z" fill={LIGHT} /> },
  ];
  return (
    <Section title="パスファインダー">
      <div className="mt-2 mr-[5px] flex justify-between">
        <div className="mt-[22px] ml-3 flex gap-[34px]">
          {shapes.map((s) => (
            <button key={s.name} aria-label={s.name}>
              <Icon w={28} h={28}>
                {s.art}
              </Icon>
            </button>
          ))}
        </div>
        <button disabled className="h-[42px] w-[92px] rounded-[4px] bg-[#585858] pt-[2px] text-2xl text-[#7e7e7e]">
          拡張
        </button>
      </div>
      <div className="mt-[6px] mr-[13px] flex justify-end pb-3">
        <MoreButton label="パスファインダーの詳細" />
      </div>
    </Section>
  );
}

function RightDock() {
  return (
    <aside className="flex w-[584px] shrink-0 flex-col border-r-2 border-l-2 border-[#383838] bg-[#535353]">
      <div className="flex h-6 shrink-0 items-center justify-between border-b-2 border-[#383838] bg-[#424242] pr-3 pl-[49px]">
        <button aria-label="パネルを展開">
          <Double dir="left" />
        </button>
        <button aria-label="アイコンパネル化">
          <Double dir="right" />
        </button>
      </div>
      <div className="flex min-h-0 flex-1">
        <div className="mr-[2px] w-[76px] shrink-0 border-r-2 border-[#383838]">
          <div className="flex h-[138px] flex-col items-center border-b-2 border-[#383838] pt-[6px] pl-[3px]">
            <Grip />
            <button aria-label="線パネル" className="mt-5">
              <Icon w={34} h={24}>
                <path d="M0 0H34V2H0ZM0 8H34V12H0ZM0 18H34V24H0Z" fill={LIGHT} />
              </Icon>
            </button>
            <button aria-label="透明パネル" className="mt-7">
              <Icon w={36} h={36}>
                <circle cx="13" cy="13" r="13" fill={LIGHT} />
                <circle cx="22" cy="22" r="12" fill="#6a6a6a" />
                <path d="M26 13A13 13 0 0 1 11 26A12 12 0 0 1 26 13Z" fill="#8a8a8a" />
                <circle cx="22" cy="22" r="12" fill="none" stroke={LIGHT} strokeWidth="2" />
              </Icon>
            </button>
          </div>
        </div>
        <div className="min-w-0 flex-1 border-l-2 border-[#383838]">
          <div role="tablist" className="flex h-[54px] bg-[#424242] text-[22px] text-[#a8a8a8]">
            <button role="tab" aria-selected="true" className="w-[144px] bg-[#535353] pb-[2px] font-medium text-white">
              プロパティ
            </button>
            <button role="tab" className="w-[108px] overflow-hidden border-r-2 border-b-2 border-l-2 border-[#383838] pl-4 text-left whitespace-nowrap">
              レイヤー
            </button>
            <button role="tab" className="w-[168px] overflow-hidden border-r-2 border-b-2 border-[#383838] pl-[18px] text-left whitespace-nowrap">
              CC ライブラリ
            </button>
            <span className="flex-1 border-b-2 border-[#383838]" />
          </div>
          <div className="mr-[25px] flex h-[66px] items-center border-b-2 border-[#4b4b4b] pt-1 pl-5 text-2xl text-[#cfcfcf]">オブジェクトの混在</div>
          <TransformSection />
          <AppearanceSection />
          <AlignSection />
          <PathfinderSection />
          <Section title="クイック操作" pt="pt-[30px]">
            <div className="mt-[17px] flex flex-col gap-5">
              {["グループ", "オブジェクトを再配色", "ピクセルグリッドに整合", "クリッピングマスクを作成"].map((t) => (
                <button key={t} className="h-[42px] rounded-[5px] border-2 border-[#757575] pt-[1px] text-2xl leading-none text-white">
                  {t}
                </button>
              ))}
            </div>
          </Section>
        </div>
      </div>
    </aside>
  );
}

/* ---------- alert ---------- */

function AlertDialog() {
  return (
    <div
      role="alertdialog"
      aria-labelledby="alert-title"
      className="absolute top-[467px] left-[612px] w-[988px] overflow-hidden rounded-[20px] bg-[#535353] shadow-[0_0_0_1px_#00000040,0_36px_80px_#00000080]"
    >
      <h2 id="alert-title" className="h-[59px] border-b-2 border-[#2b2b2b] bg-[#dadada] text-center text-[26px] leading-[56px] font-bold text-[#3c3c3c]">
        Adobe Illustrator
      </h2>
      <div className="flex pt-5 pl-8">
        <Icon w={60} h={62} className="mt-[7px]">
          <path d="M27 4Q30 -2 33 4L59 56Q61 61 56 61H4Q-1 61 1 56Z" fill="#f5c60a" />
          <path d="M26 17H34V40H26ZM26 45H34V53H26Z" fill="#1c1c1c" />
        </Icon>
        <p className="ml-[42px] w-[820px] text-[26px] leading-10 text-white">
          フィルターが適用されませんでした。交差する 2 つのパスを選択してください。
        </p>
      </div>
      <div className="flex justify-end pt-[26px] pr-[30px] pb-[30px]">
        <button className="h-[42px] w-40 rounded-full bg-[#469ff6] text-[26px] leading-none text-white">OK</button>
      </div>
    </div>
  );
}

export default function App() {
  return (
    <div className="bg-[#9aa0a6] font-['Inter','Noto_Sans_CJK_JP',sans-serif]" lang="ja">
      <div className="relative flex h-screen flex-col overflow-hidden rounded-t-[14px] border-b-2 border-[#383838] bg-[#383838]">
        <TitleBar />
        <ControlBar />
        <div className="flex min-h-0 flex-1 bg-[#535353]">
          <Toolbox />
          <DocumentWindow />
          <span className="w-[2px] shrink-0 bg-[#535353]" />
          <RightDock />
        </div>
        <AlertDialog />
      </div>
    </div>
  );
}
